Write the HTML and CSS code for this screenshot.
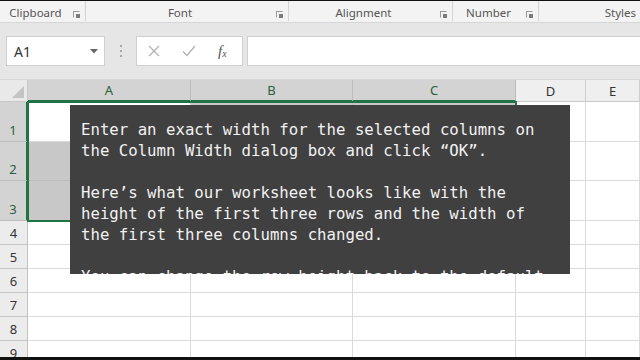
FILE: index.html
```html
<!DOCTYPE html>
<html lang="en">

<head>
    <meta charset="UTF-8">
    <meta name="viewport" content="width=device-width, initial-scale=1.0">
    <title>Column Width</title>
    <link rel="stylesheet" href="styles.css">
</head>

<body>
    <div class="app">
        <!-- Ribbon group labels -->
        <div class="ribbon">
            <div class="group g-clipboard"><span class="label">Clipboard</span><span class="launcher"></span></div>
            <div class="group g-font"><span class="label">Font</span><span class="launcher"></span></div>
            <div class="group g-align"><span class="label">Alignment</span><span class="launcher"></span></div>
            <div class="group g-number"><span class="label">Number</span><span class="launcher"></span></div>
            <div class="group g-styles"><span class="label right">Styles</span></div>
        </div>

        <!-- Formula bar -->
        <div class="formula-bar">
            <div class="name-box">
                <span>A1</span>
                <svg width="8" height="5" viewBox="0 0 8 5"><path d="M0 0h8L4 4.5z" fill="#666" /></svg>
            </div>
            <div class="dots"><i></i><i></i><i></i></div>
            <div class="fn-box">
                <svg class="ico-x" width="12" height="12" viewBox="0 0 12 12"><path d="M1 1l10 10M11 1L1 11" stroke="#b4b4b4" stroke-width="1.4" fill="none" /></svg>
                <svg class="ico-ok" width="14" height="12" viewBox="0 0 14 12"><path d="M1 6.5l4 4L13 1" stroke="#b4b4b4" stroke-width="1.4" fill="none" /></svg>
                <span class="fx">f<sub>x</sub></span>
            </div>
            <div class="formula-input"></div>
        </div>

        <!-- Worksheet -->
        <div class="sheet-wrap">
            <div class="sheet">
                <div class="corner"><span class="tri"></span></div>
                <div class="colhead sel">A</div>
                <div class="colhead sel">B</div>
                <div class="colhead sel">C</div>
                <div class="colhead">D</div>
                <div class="colhead">E</div>

                <div class="rowhead sel">1</div>
                <div class="cell active"></div><div class="cell tint"></div><div class="cell tint"></div><div class="cell"></div><div class="cell"></div>
                <div class="rowhead sel">2</div>
                <div class="cell tint"></div><div class="cell tint"></div><div class="cell tint"></div><div class="cell"></div><div class="cell"></div>
                <div class="rowhead sel">3</div>
                <div class="cell tint"></div><div class="cell tint"></div><div class="cell tint"></div><div class="cell"></div><div class="cell"></div>
                <div class="rowhead">4</div>
                <div class="cell"></div><div class="cell"></div><div class="cell"></div><div class="cell"></div><div class="cell"></div>
                <div class="rowhead">5</div>
                <div class="cell"></div><div class="cell"></div><div class="cell"></div><div class="cell"></div><div class="cell"></div>
                <div class="rowhead">6</div>
                <div class="cell"></div><div class="cell"></div><div class="cell"></div><div class="cell"></div><div class="cell"></div>
                <div class="rowhead">7</div>
                <div class="cell"></div><div class="cell"></div><div class="cell"></div><div class="cell"></div><div class="cell"></div>
                <div class="rowhead">8</div>
                <div class="cell"></div><div class="cell"></div><div class="cell"></div><div class="cell"></div><div class="cell"></div>
                <div class="rowhead">9</div>
                <div class="cell"></div><div class="cell"></div><div class="cell"></div><div class="cell"></div><div class="cell"></div>
            </div>

            <!-- selection outline over A1:C3 -->
            <div class="selection"></div>

            <!-- caption overlay -->
            <div class="caption">
                <p>Enter an exact width for the selected columns on<br>the Column Width dialog box and click “OK”.</p>
                <p>Here’s what our worksheet looks like with the<br>height of the first three rows and the width of<br>the first three columns changed.</p>
                <p>You can change the row height back to the default</p>
            </div>
        </div>
    </div>
</body>

</html>
```

FILE: styles.css
```css
html,
body {
    margin: 0;
    background-color: #111;
}

body {
    width: 640px;
    height: 360px;
    overflow: hidden;
    font-family: "Noto Sans", "Open Sans", sans-serif;
    color: #444;
}

.app {
    margin-top: 1px;
    height: 356px;
    overflow: hidden;
    background-color: #e6e6e6;
}

/* ribbon labels */
.ribbon {
    display: flex;
    height: 21px;
    background-color: #f3f3f3;
    border-bottom: 1px solid #d6d6d6;
}

.group {
    display: flex;
    align-items: center;
    border-right: 1px solid #d4d4d4;
    box-sizing: border-box;
    height: 20px;
}

.g-clipboard { width: 86px; }
.g-font { width: 203px; }
.g-align { width: 164px; }
.g-number { width: 86px; }
.g-styles { flex: 1; border-right: none; }

.label {
    flex: 1;
    text-align: center;
    font-size: 11.5px;
    color: #555;
    margin-top: 3px;
}

.label.right {
    text-align: right;
    padding-right: 4px;
}

.launcher {
    width: 7px;
    height: 7px;
    margin: 6px 5px 0 2px;
    border: 1px solid #9a9a9a;
    border-right-color: #f3f3f3;
    border-bottom-color: #f3f3f3;
    box-sizing: border-box;
    position: relative;
}

.launcher::after {
    content: "";
    position: absolute;
    right: -1px;
    bottom: -1px;
    width: 4px;
    height: 4px;
    background-color: #7a7a7a;
}

/* formula bar */
.formula-bar {
    display: flex;
    align-items: center;
    height: 30px;
    padding: 13px 0 13px 6px;
    border-bottom: 1px solid #d8d8d8;
}

.name-box {
    display: flex;
    align-items: center;
    justify-content: space-between;
    width: 99px;
    height: 30px;
    box-sizing: border-box;
    padding: 0 6px 0 7px;
    background-color: #fff;
    border: 1px solid #cfcfcf;
    font-size: 14px;
    color: #333;
}

.dots {
    display: flex;
    flex-direction: column;
    gap: 3px;
    width: 31px;
    align-items: center;
}

.dots i {
    width: 2px;
    height: 2px;
    background-color: #a8a8a8;
}

.fn-box {
    display: flex;
    align-items: center;
    width: 107px;
    height: 30px;
    box-sizing: border-box;
    padding: 0 0 0 11px;
    background-color: #fff;
    border: 1px solid #cfcfcf;
}

.ico-ok {
    margin-left: 22px;
}

.fx {
    margin-left: 22px;
    font-family: "Liberation Serif", serif;
    font-style: italic;
    font-size: 15px;
    color: #555;
}

.fx sub {
    font-size: 10px;
    vertical-align: -1px;
}

.formula-input {
    flex: 1;
    height: 30px;
    margin-left: 4px;
    box-sizing: border-box;
    background-color: #fff;
    border: 1px solid #cfcfcf;
    border-right: none;
}

/* sheet */
.sheet-wrap {
    position: relative;
}

.sheet {
    display: grid;
    grid-template-columns: 28px 163px 162px 163px 70px 1fr;
    grid-template-rows: 22px 40px 39px 40px 24px 24px 24px 24px 24px 24px;
    background-color: #fff;
}

.corner {
    background-color: #e9e9e9;
    border-right: 1px solid #c8c8c8;
    border-bottom: 1px solid #c8c8c8;
    position: relative;
}

.tri {
    position: absolute;
    right: 3px;
    bottom: 3px;
    width: 0;
    height: 0;
    border-left: 12px solid transparent;
    border-bottom: 12px solid #c4c4c4;
}

.colhead {
    display: flex;
    align-items: center;
    justify-content: center;
    background-color: #efefef;
    border-right: 1px solid #cfcfcf;
    border-bottom: 1px solid #c8c8c8;
    font-size: 13px;
    color: #333;
    box-sizing: border-box;
}

.colhead.sel {
    background-color: #d3d3d3;
    color: #2c5e3c;
    border-right-color: #bdbdbd;
    border-bottom: 2px solid #217346;
}

.rowhead {
    display: flex;
    align-items: flex-end;
    justify-content: center;
    padding-bottom: 2px;
    box-sizing: border-box;
    background-color: #ececec;
    border-right: 1px solid #c0c0c0;
    border-bottom: 1px solid #c6c6c6;
    font-size: 13px;
    color: #333;
}

.rowhead.sel {
    background-color: #d3d3d3;
    color: #2c5e3c;
    border-right: 2px solid #217346;
    border-bottom-color: #bdbdbd;
}

.cell {
    border-right: 1px solid #dadada;
    border-bottom: 1px solid #dadada;
    box-sizing: border-box;
}

.cell.tint {
    background-color: #c8c8c8;
    border-color: #bdbdbd;
}

.selection {
    position: absolute;
    left: 27px;
    top: 21px;
    width: 490px;
    height: 121px;
    box-sizing: border-box;
    border: 2px solid #217346;
    pointer-events: none;
}

.caption {
    position: absolute;
    left: 70px;
    top: 25px;
    width: 500px;
    height: 169px;
    box-sizing: border-box;
    padding: 13.8px 0 0 11px;
    overflow: hidden;
    background-color: #404040;
    color: #f2f2f2;
    font-family: "DejaVu Sans Mono", monospace;
    font-size: 15.7px;
    line-height: 21px;
}

.caption p {
    margin: 0 0 21px;
    white-space: nowrap;
}
```
